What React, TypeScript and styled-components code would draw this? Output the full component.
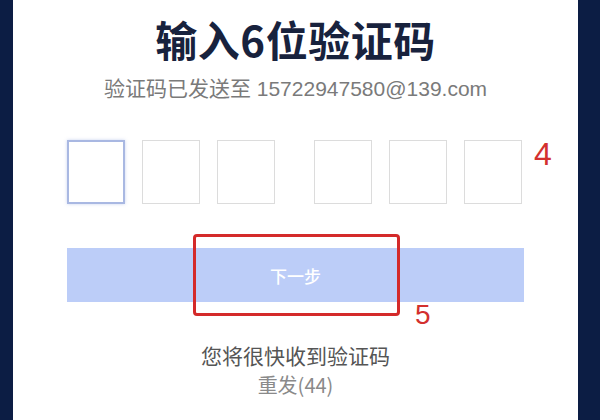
import React from 'react';
import styled, { createGlobalStyle } from 'styled-components';

const GlobalStyle = createGlobalStyle`
  html, body {
    margin: 0;
    padding: 0;
    background: #0c1d44;
  }
  body {
    font-family: "Liberation Sans", "Noto Sans CJK SC", sans-serif;
  }
`;

const Page = styled.div`
  width: 600px;
  height: 420px;
  display: flex;
  padding: 0 22px 0 13px;
  box-sizing: border-box;
  background: #0c1d44;
  overflow: hidden;
`;

const Panel = styled.div`
  flex: 1;
  background: #ffffff;
  display: flex;
  flex-direction: column;
  align-items: center;
  padding-top: 12px;
`;

const Title = styled.h1`
  margin: 0;
  font-family: "Noto Sans CJK SC", sans-serif;
  font-size: 42px;
  line-height: 54px;
  font-weight: 700;
  color: #18223d;
  letter-spacing: 0.5px;
`;

const Subtitle = styled.p`
  margin: 10px 0 0;
  font-size: 21px;
  line-height: 26px;
  color: #7a7a7a;
  white-space: nowrap;
`;

const Form = styled.div`
  position: relative;
  width: 457px;
  margin-top: 38px;
  display: flex;
  flex-direction: column;
`;

const CodeRow = styled.div`
  display: flex;
  gap: 17px;
`;

const CodeBox = styled.div<{ $active?: boolean; $split?: boolean }>`
  width: 58px;
  height: 64px;
  box-sizing: border-box;
  margin-left: ${({ $split }) => ($split ? '22px' : '0')};
  border: ${({ $active }) => ($active ? '2px solid #a9b8e2' : '1px solid #dcdcdc')};
  box-shadow: ${({ $active }) => ($active ? '0 0 3px rgba(150, 170, 225, 0.5)' : 'none')};
  background: #fff;
`;

const NextButton = styled.div`
  margin-top: 44px;
  height: 54px;
  background: #bccdf8;
  color: #ffffff;
  display: flex;
  align-items: center;
  justify-content: center;
  font-family: "Noto Sans CJK SC", sans-serif;
  font-size: 17px;
  font-weight: 500;
`;

const Mark = styled.span<{ $top: number; $left: number; $size: number }>`
  position: absolute;
  top: ${({ $top }) => $top}px;
  left: ${({ $left }) => $left}px;
  font-family: "Liberation Sans", sans-serif;
  font-size: ${({ $size }) => $size}px;
  line-height: 1;
  color: #d3302e;
`;

const Highlight = styled.div`
  position: absolute;
  top: 94px;
  left: 126px;
  width: 207px;
  height: 82px;
  box-sizing: border-box;
  border: 3px solid #d42a2a;
  border-radius: 4px;
`;

const Hint = styled.p`
  margin: 39px 0 0;
  font-family: "Noto Sans CJK SC", sans-serif;
  font-size: 21px;
  line-height: 28px;
  color: #555555;
`;

const Resend = styled.p`
  margin: 3px 0 0;
  font-family: "Noto Sans CJK SC", sans-serif;
  font-size: 20px;
  line-height: 26px;
  color: #8a8a8a;
`;

const App: React.FC = () => {
  return (
    <Page>
      <GlobalStyle />
      <Panel>
        <Title>输入6位验证码</Title>
        <Subtitle>验证码已发送至 15722947580@139.com</Subtitle>
        <Form>
          <CodeRow>
            <CodeBox $active />
            <CodeBox />
            <CodeBox />
            <CodeBox $split />
            <CodeBox />
            <CodeBox />
          </CodeRow>
          <NextButton>下一步</NextButton>
          <Mark $top={-2} $left={467} $size={32}>4</Mark>
          <Highlight />
          <Mark $top={161} $left={348} $size={28}>5</Mark>
        </Form>
        <Hint>您将很快收到验证码</Hint>
        <Resend>重发(44)</Resend>
      </Panel>
    </Page>
  );
};

export default App;
